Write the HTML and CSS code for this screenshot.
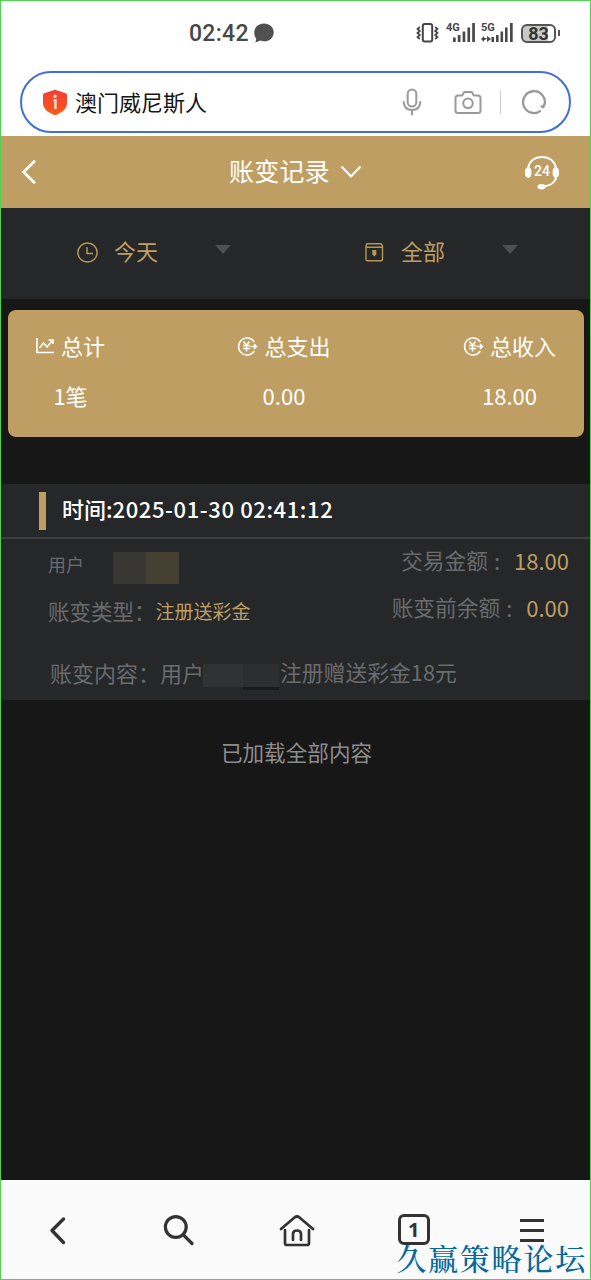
FILE: index.html
```
<!DOCTYPE html>
<html lang="zh-CN">
<head>
<meta charset="utf-8">
<title>账变记录</title>
<link rel="stylesheet" href="styles.css">
</head>
<body>
<div class="phone">
  <div class="status">
    <span class="clock">02:42</span>
    <svg class="bubble" width="20" height="20" viewBox="0 0 20 20"><path d="M10 .5c5.500 0 9.700 3.800 9.700 8.900s-4.200 8.900-9.700 8.900c-1.400 0-2.700-.2-3.900-.7-1.200.8-2.700 1.400-4.900 1.600.8-1.300 1.100-2.500.9-3.800C.9 13.800.3 11.700.3 9.400.3 4.300 4.500.5 10 .5z" fill="#505050"/></svg>
    <svg class="vibrate" width="23" height="20" viewBox="0 0 23 20" fill="none" stroke="#444"><rect x="6.800" y="1" width="9.400" height="17.500" rx="2" stroke-width="2"/><path d="M3.800 4L1.500 6l2.300 2-2.300 2 2.300 2-2.300 2 2.300 2M19.200 4l2.300 2-2.300 2 2.300 2-2.300 2 2.300 2-2.300 2" stroke-width="1.700"/></svg>
    <div class="signal">
      <span class="net">4G</span>
      <svg width="30" height="20" viewBox="0 0 30 20" fill="#484848"><path d="M7 14.500h2.700V19H7zM11.800 12h2.700v7h-2.700zM16.600 8.500h2.700V19h-2.700zM21.400 4.500h2.700V19h-2.700zM26.200 0h2.700v19h-2.700z"/></svg>
    </div>
    <div class="signal five">
      <span class="net">5G</span>
      <svg width="33" height="20" viewBox="0 0 33 20" fill="#484848"><path d="M0 16l3-3v2h3l-2 2H3v2zM6 13l4 3-4 3zM10.500 14h2.600v5h-2.600zM15 12h2.600v7H15zM19.500 8.500h2.600V19h-2.600zM24 4.500h2.600V19H24zM29 0h2.700v19H29z"/></svg>
    </div>
    <div class="battery"><span>83</span></div>
    <i class="nub"></i>
  </div>

  <div class="address">
  <div class="search">
    <svg width="26" height="27" viewBox="0 0 26 27"><defs><linearGradient id="shield" x2="0" y2="1"><stop stop-color="#f33c35"/><stop offset="1" stop-color="#fb5b17"/></linearGradient></defs><path d="M13 .7L23.700 4.200Q25 4.800 25 6v8c0 6-5 9.600-12 12.300C6 23.600 1 20 1 14V6q0-1.200 1.300-1.800z" fill="url(#shield)"/><path d="M11.200 11.200h2.200V20" fill="none" stroke="#ffd7ca" stroke-width="2.600"/><circle cx="13" cy="7.300" r="1.800" fill="#ffd7ca"/></svg>
    <span class="site">澳门威尼斯人</span>
    <svg class="mic" width="20" height="28" viewBox="0 0 20 28" fill="none" stroke="#999" stroke-width="2" stroke-linecap="round"><rect x="5.700" y="1.500" width="8.600" height="17" rx="4.300"/><path d="M1.700 14c.3 5 3.500 8 8.300 8s8-3 8.300-8M10 22v4.500"/></svg>
    <svg class="camera" width="28" height="25" viewBox="0 0 28 25" fill="none" stroke="#999" stroke-width="2"><path d="M4 5.500h3.500q.8 0 1.200-.8l1-2Q10.200 2 11 2h6q.8 0 1.300.7l1 2q.4.8 1.200.8H24q2.500 0 2.500 2.500v12.500Q26.500 23 24 23H4q-2.500 0-2.500-2.500V8Q1.500 5.500 4 5.500z"/><circle cx="14" cy="13.300" r="4.800"/></svg>
    <i class="divider"></i>
    <svg class="reload" width="26" height="26" viewBox="0 0 26 26" fill="none" stroke="#999" stroke-width="2.300"><path d="M19.800 21.600A10.900 10.900 0 1 1 23.600 15.500M23.800 14.500l-1.500 3.500-2.500-.8"/></svg>
  </div>
  </div>

  <header class="titlebar">
    <svg width="16" height="26" viewBox="0 0 16 26" fill="none" stroke="#fff" stroke-width="2.700"><path d="M14 1.800L2.600 13 14 24.200"/></svg>
    <h1>账变记录</h1>
    <svg class="down" width="22" height="14" viewBox="0 0 22 14" fill="none" stroke="#fff" stroke-width="2.200"><path d="M1.500 1.500L11 11.500l9.500-10"/></svg>
    <div class="service">
      <svg width="36" height="35" viewBox="0 0 36 35" fill="none" stroke="#fff" stroke-width="2"><path d="M4 13C5.500 6 11 2 18 2s12.500 4 14 11M32.500 21c-1 6-6 10-13 10.500"/><ellipse cx="4.200" cy="17.500" rx="2.800" ry="5" fill="#fff" stroke-width="1"/><ellipse cx="31.800" cy="17.500" rx="2.800" ry="5" fill="#fff" stroke-width="1"/><ellipse cx="17.500" cy="31.700" rx="4" ry="2.700" fill="#fff" stroke="none"/></svg>
      <span>24</span>
    </div>
  </header>

  <nav class="filters">
    <div class="filter">
      <svg width="21" height="21" viewBox="0 0 21 21" fill="none" stroke="#b49655" stroke-width="1.500"><circle cx="10.500" cy="10.500" r="9.600"/><path d="M10 5v6.500h6"/></svg>
      <span>今天</span><i class="caret"></i>
    </div>
    <div class="filter">
      <svg width="21" height="21" viewBox="0 0 21 21" fill="none" stroke="#b49655" stroke-width="1.400"><path d="M3 1.700h14L18.500 4v13.500q0 1.300-1.300 1.300H3.300Q2 18.800 2 17.500V4zM2 5.300h16.500"/><path d="M8.300 8h4v4.500l-2 2-2-2z" fill="#b49655" stroke="none"/></svg>
      <span>全部</span><i class="caret"></i>
    </div>
  </nav>

  <section class="summary">
    <div class="total">
      <div class="label"><svg width="19" height="18" viewBox="0 0 19 18" fill="none" stroke="#fff" stroke-width="1.600"><path d="M1 1v14.500h17M3.500 11l4-5 3.500 4 5.500-6.500M12.500 3h4.500v4"/></svg><span>总计</span></div>
      <div class="value">1笔</div>
    </div>
    <div class="total">
      <div class="label"><svg width="21" height="19" viewBox="0 0 21 19" fill="none" stroke="#fff" stroke-width="1.500"><path d="M17.300 5A8.500 8.500 0 1 0 17.300 14M13.500 9.500h5.500M17 7l2.500 2.500L17 12M6.500 4.500l3 3.500 3-3.500M6 8.500h7M6 11.500h7M9.500 8v6.500"/></svg><span>总支出</span></div>
      <div class="value">0.00</div>
    </div>
    <div class="total">
      <div class="label"><svg width="21" height="19" viewBox="0 0 21 19" fill="none" stroke="#fff" stroke-width="1.500"><path d="M17.300 5A8.500 8.500 0 1 0 17.300 14M13.500 9.500h5.500M17 7l2.500 2.500L17 12M6.500 4.500l3 3.500 3-3.500M6 8.500h7M6 11.500h7M9.500 8v6.500"/></svg><span>总收入</span></div>
      <div class="value">18.00</div>
    </div>
  </section>

  <article class="record">
    <div class="when"><i></i><span>时间:<b>2025-01-30 02:41:12</b></span></div>
    <div class="fields">
      <div class="left">
        <div class="user"><span>用户</span><i class="mask-a"></i><i class="mask-b"></i></div>
        <div class="type"><span>账变类型：</span><em>注册送彩金</em></div>
      </div>
      <div class="right">
        <div><span>交易金额</span><u>:</u><em>18.00</em></div>
        <div><span>账变前余额</span><u>:</u><em>0.00</em></div>
      </div>
    </div>
    <div class="detail"><span>账变内容：</span><span class="who">用户</span><span class="redact"><i></i><i></i></span><span>注册赠送彩金18元</span></div>
  </article>

  <p class="end">已加载全部内容</p>

  <footer class="toolbar">
    <svg width="40" height="40" viewBox="0 0 40 40" fill="none" stroke="#333" stroke-width="3.400" stroke-linecap="round" stroke-linejoin="round"><path d="M24.500 9L13 20.500 24.500 32.500"/></svg>
    <svg width="40" height="40" viewBox="0 0 40 40" fill="none" stroke="#333" stroke-width="3.200" stroke-linecap="round"><circle cx="18.800" cy="17" r="10.400"/><path d="M26.500 25l8.500 8.500"/></svg>
    <svg width="40" height="40" viewBox="0 0 40 40" fill="none" stroke="#333" stroke-width="2.700" stroke-linecap="round" stroke-linejoin="round"><path d="M5 19L18.500 7.500q2.500-2 5 0L37 19M9 20v13q0 2 2 2h20q2 0 2-2V20M17 30v-6q0-3.500 4-3.500t4 3.500v6"/></svg>
    <div class="tabs">1</div>
    <svg width="40" height="40" viewBox="0 0 40 40" fill="none" stroke="#333" stroke-width="3.200"><path d="M8 10.500h24M8 20.500h24M8 30.500h24"/></svg>
    <span class="watermark">久赢策略论坛</span>
  </footer>
</div>
</body>
</html>
```
FILE: styles.css
```
* { box-sizing: border-box; }
body {
  margin: 0;
  font-family: "Noto Sans CJK SC", sans-serif;
  background: #171717;
}
svg { display: block; flex: none; }
i, em, u { font-style: normal; text-decoration: none; }
.phone {
  width: 591px;
  height: 1280px;
  border: 1px solid #4fd24f;
  display: flex;
  flex-direction: column;
  overflow: hidden;
  background: #171717;
}

/* system status bar */
.status {
  height: 70px;
  flex: none;
  background: #fff;
  display: flex;
  align-items: center;
  padding: 0 29px 6px 188px;
  color: #484848;
}
.clock { font: 500 23px/30px Roboto, sans-serif; letter-spacing: .3px; width: 65px; padding-top: 1px; white-space: nowrap; }
.bubble { margin-right: 142px; }
.vibrate { margin-right: 7px; }
.signal { position: relative; width: 30px; height: 20px; margin-right: 5px; }
.signal.five { width: 33px; margin-right: 7px; }
.net {
  position: absolute;
  left: 0;
  top: -1px;
  font: 700 11px/12px Roboto, sans-serif;
}
.battery {
  width: 35px;
  height: 19px;
  flex: none;
  border: 2px solid #555;
  border-radius: 6px;
  background: linear-gradient(90deg, #c9c9c9 80%, #fff 80%);
  font: 700 18px/16px Roboto, sans-serif;
  text-align: center;
  color: #333;
}
.nub { width: 2px; height: 6px; flex: none; margin-left: 2px; background: #555; }

/* browser address field */
.address { flex: none; padding: 0 19px 3px; background: #fff; }
.search {
  height: 62px;
  padding: 0 22px 0 20px;
  border: 2px solid #416edb;
  border-radius: 31px;
  display: flex;
  align-items: center;
}
.site { margin-left: 7px; padding-bottom: 3px; font-size: 22px; line-height: 30px; color: #161616; flex: 1; }
.mic { margin-right: 32px; }
.camera { margin-right: 18px; }
.divider { width: 1px; height: 24px; background: #ccc; margin-right: 20px; }

/* page title */
.titlebar {
  height: 72px;
  flex: none;
  padding: 0 30px 0 20px;
  display: flex;
  align-items: center;
  background: #be9e62;
  color: #fff;
}
h1 { margin: 0 0 0 192px; padding-bottom: 4px; font-size: 25px; font-weight: 400; line-height: 34px; letter-spacing: .2px; }
.down { margin-left: 10px; }
.service { position: relative; margin-left: auto; }
.service span {
  position: absolute;
  inset: 8px 0 auto;
  font: 500 14px/16px Roboto, sans-serif;
  text-align: center;
}

.filters {
  height: 91px;
  flex: none;
  display: grid;
  grid-template-columns: 287px 1fr;
  background: #252729;
  color: #be9e62;
}
.filter { display: flex; align-items: center; padding: 0 0 2px 76px; }
.filter span { margin-left: 16px; padding-bottom: 5px; font-size: 22px; line-height: 30px; }
.caret {
  margin: 0 0 7px 57px;
  border: solid transparent;
  border-width: 9px 8px 0;
  border-top-color: #4d4f51;
}

/* totals card */
.summary {
  height: 127px;
  flex: none;
  margin: 11px 6px 47px 7px;
  padding: 19px 28px 0;
  border-radius: 8px;
  display: flex;
  justify-content: space-between;
  background: #be9e62;
  color: #fff;
  font-size: 22px;
  line-height: 32px;
}
.total { text-align: center; }
.label { display: flex; align-items: center; }
.label svg { margin-top: 2px; }
.label span { margin-left: 6px; }
.value { margin-top: 18px; }

.record { height: 216px; flex: none; background: #252729; color: #696b6d; }
.when {
  height: 55px;
  padding-left: 38px;
  border-bottom: 2px solid #3d3f41;
  display: flex;
  align-items: center;
  color: #fff;
  font-size: 22px;
  font-weight: 500;
  line-height: 30px;
}
.when i { width: 7px; height: 38px; background: #be9e62; margin-right: 16px; }
.when span { padding-bottom: 5px; }
.when b { font-weight: 500; letter-spacing: .6px; }
.fields { height: 108px; display: flex; justify-content: space-between; }
.left { padding-left: 47px; }
.user { height: 53px; display: flex; align-items: flex-start; font-size: 18px; line-height: 24px; padding-top: 13px; }
.mask-a, .mask-b { width: 33px; height: 32px; }
.mask-a { margin-left: 29px; background: #383632; }
.mask-b { background: #464032; }
.type { display: flex; font-size: 21.500px; line-height: 38px; white-space: nowrap; }
.type em { font-size: 19px; color: #be9e62; }
.right { padding: 5px 21px 0 0; text-align: right; font-size: 22px; line-height: 32px; }
.right div { display: flex; justify-content: flex-end; height: 47px; }
.right span { font-size: 21.700px; }
.right u { margin: 0 14px 0 6px; }
.right em { color: #be9e62; }
.detail { display: flex; padding-left: 49px; font-size: 22px; line-height: 50px; white-space: nowrap; }
.detail span:first-child { width: 110px; }
.who { width: 43px; }
.detail span:last-child { font-size: 21.800px; }
.redact { display: flex; width: 77px; height: 26px; margin-top: 17px; }
.redact i { width: 40px; background: #303234; border-bottom: 3px solid #252729; }
.redact i:last-child { width: 36px; background: #2c2e30; border-bottom-color: #191a1a; }

.end { margin: 35px 0 0; padding-left: 2px; text-align: center; font-size: 21.600px; line-height: 34px; color: #8c8c8c; }

/* browser toolbar */
.toolbar {
  position: relative;
  height: 99px;
  flex: none;
  margin-top: auto;
  padding: 0 38px;
  display: flex;
  align-items: center;
  justify-content: space-between;
  background: #fafafa;
}
.tabs {
  width: 32px;
  height: 31px;
  margin: 0 4px;
  border: 3px solid #333;
  border-radius: 6px;
  font: 700 20px/25px "Noto Sans", sans-serif;
  text-align: center;
  color: #333;
}
.watermark {
  position: absolute;
  right: 3px;
  bottom: 5px;
  font: 500 30px/34px "AR PL UKai CN", KaiTi, "Noto Serif CJK SC", "Noto Sans CJK SC", serif;
  letter-spacing: 1.800px;
  white-space: nowrap;
  color: #04689d;
}
```
